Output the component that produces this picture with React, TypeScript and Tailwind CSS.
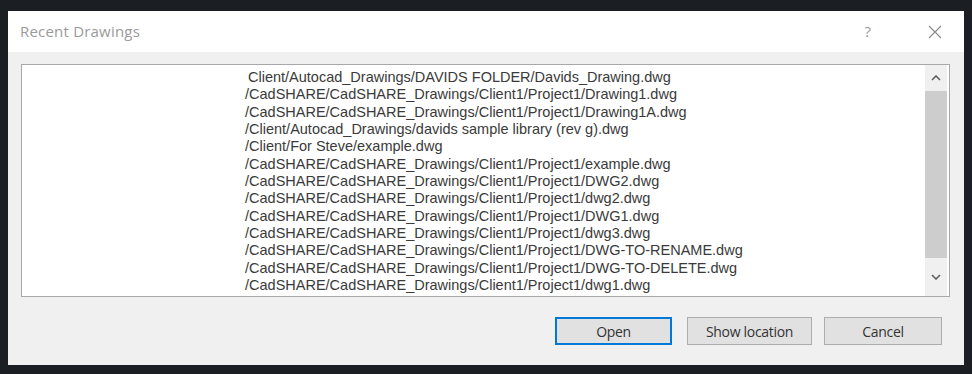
import React from 'react';

const FILES = [
  'Client/Autocad_Drawings/DAVIDS FOLDER/Davids_Drawing.dwg',
  '/CadSHARE/CadSHARE_Drawings/Client1/Project1/Drawing1.dwg',
  '/CadSHARE/CadSHARE_Drawings/Client1/Project1/Drawing1A.dwg',
  '/Client/Autocad_Drawings/davids sample library (rev g).dwg',
  '/Client/For Steve/example.dwg',
  '/CadSHARE/CadSHARE_Drawings/Client1/Project1/example.dwg',
  '/CadSHARE/CadSHARE_Drawings/Client1/Project1/DWG2.dwg',
  '/CadSHARE/CadSHARE_Drawings/Client1/Project1/dwg2.dwg',
  '/CadSHARE/CadSHARE_Drawings/Client1/Project1/DWG1.dwg',
  '/CadSHARE/CadSHARE_Drawings/Client1/Project1/dwg3.dwg',
  '/CadSHARE/CadSHARE_Drawings/Client1/Project1/DWG-TO-RENAME.dwg',
  '/CadSHARE/CadSHARE_Drawings/Client1/Project1/DWG-TO-DELETE.dwg',
  '/CadSHARE/CadSHARE_Drawings/Client1/Project1/dwg1.dwg',
];

const Chevron: React.FC<{ up?: boolean }> = ({ up }) => (
  <svg width="10" height="6" viewBox="0 0 10 6" fill="none">
    <path
      d={up ? 'M1 5 L5 1 L9 5' : 'M1 1 L5 5 L9 1'}
      stroke="#606060"
      strokeWidth="1.6"
    />
  </svg>
);

const App: React.FC = () => {
  return (
    <div className="w-[972px] h-[374px] bg-[#1b1e22] pt-[11px] pl-[8px] pr-[8px] pb-[9px] font-['Liberation_Sans',Arial,sans-serif]">
      <div className="h-full bg-[#f0f0f0] flex flex-col">
        {/* Title bar */}
        <div className="h-[41px] bg-white flex items-center pl-[12px] pr-[22px] shrink-0">
          <span className="text-[15px] text-[#9a9a9a] font-['Open_Sans',sans-serif] tracking-[0.2px]">Recent Drawings</span>
          <span className="ml-auto text-[15px] text-[#9a9a9a] font-['Open_Sans',sans-serif] mr-[57px]">?</span>
          <svg width="14" height="14" viewBox="0 0 14 14">
            <path d="M1 1 L13 13 M13 1 L1 13" stroke="#8c8c8c" strokeWidth="1.2" />
          </svg>
        </div>

        {/* List */}
        <div className="mt-[12px] ml-[13px] mr-[14px] h-[233px] bg-white border border-[#a8a8a8] flex">
          <div className="flex-1 pl-[223px] pt-[4px] text-[14.5px] leading-[17.33px] text-[#3a3a3a] overflow-hidden">
            {FILES.map((f, i) => (
              <div key={i} className={`whitespace-nowrap ${i === 0 ? 'pl-[3px]' : ''}`}>{f}</div>
            ))}
          </div>
          <div className="w-[22px] mr-[2px] flex flex-col bg-[#f0f0f0]">
            <div className="h-[26px] flex items-center justify-center">
              <Chevron up />
            </div>
            <div className="h-[167px] bg-[#cdcdcd]" />
            <div className="flex-1 flex items-center justify-center">
              <Chevron />
            </div>
          </div>
        </div>

        {/* Buttons */}
        <div className="mt-[20px] flex justify-end pr-[22px] text-[14px] text-[#333333] font-['Open_Sans',sans-serif]">
          <button className="w-[117px] h-[28px] bg-[#e1e1e1] border-2 border-[#0078d7] tracking-[-0.3px]">Open</button>
          <button className="ml-[15px] w-[125px] h-[28px] bg-[#e1e1e1] border border-[#adadad] tracking-[-0.3px]">Show location</button>
          <button className="ml-[12px] w-[118px] h-[28px] bg-[#e1e1e1] border border-[#adadad] tracking-[-0.3px]">Cancel</button>
        </div>
      </div>
    </div>
  );
};

export default App;
